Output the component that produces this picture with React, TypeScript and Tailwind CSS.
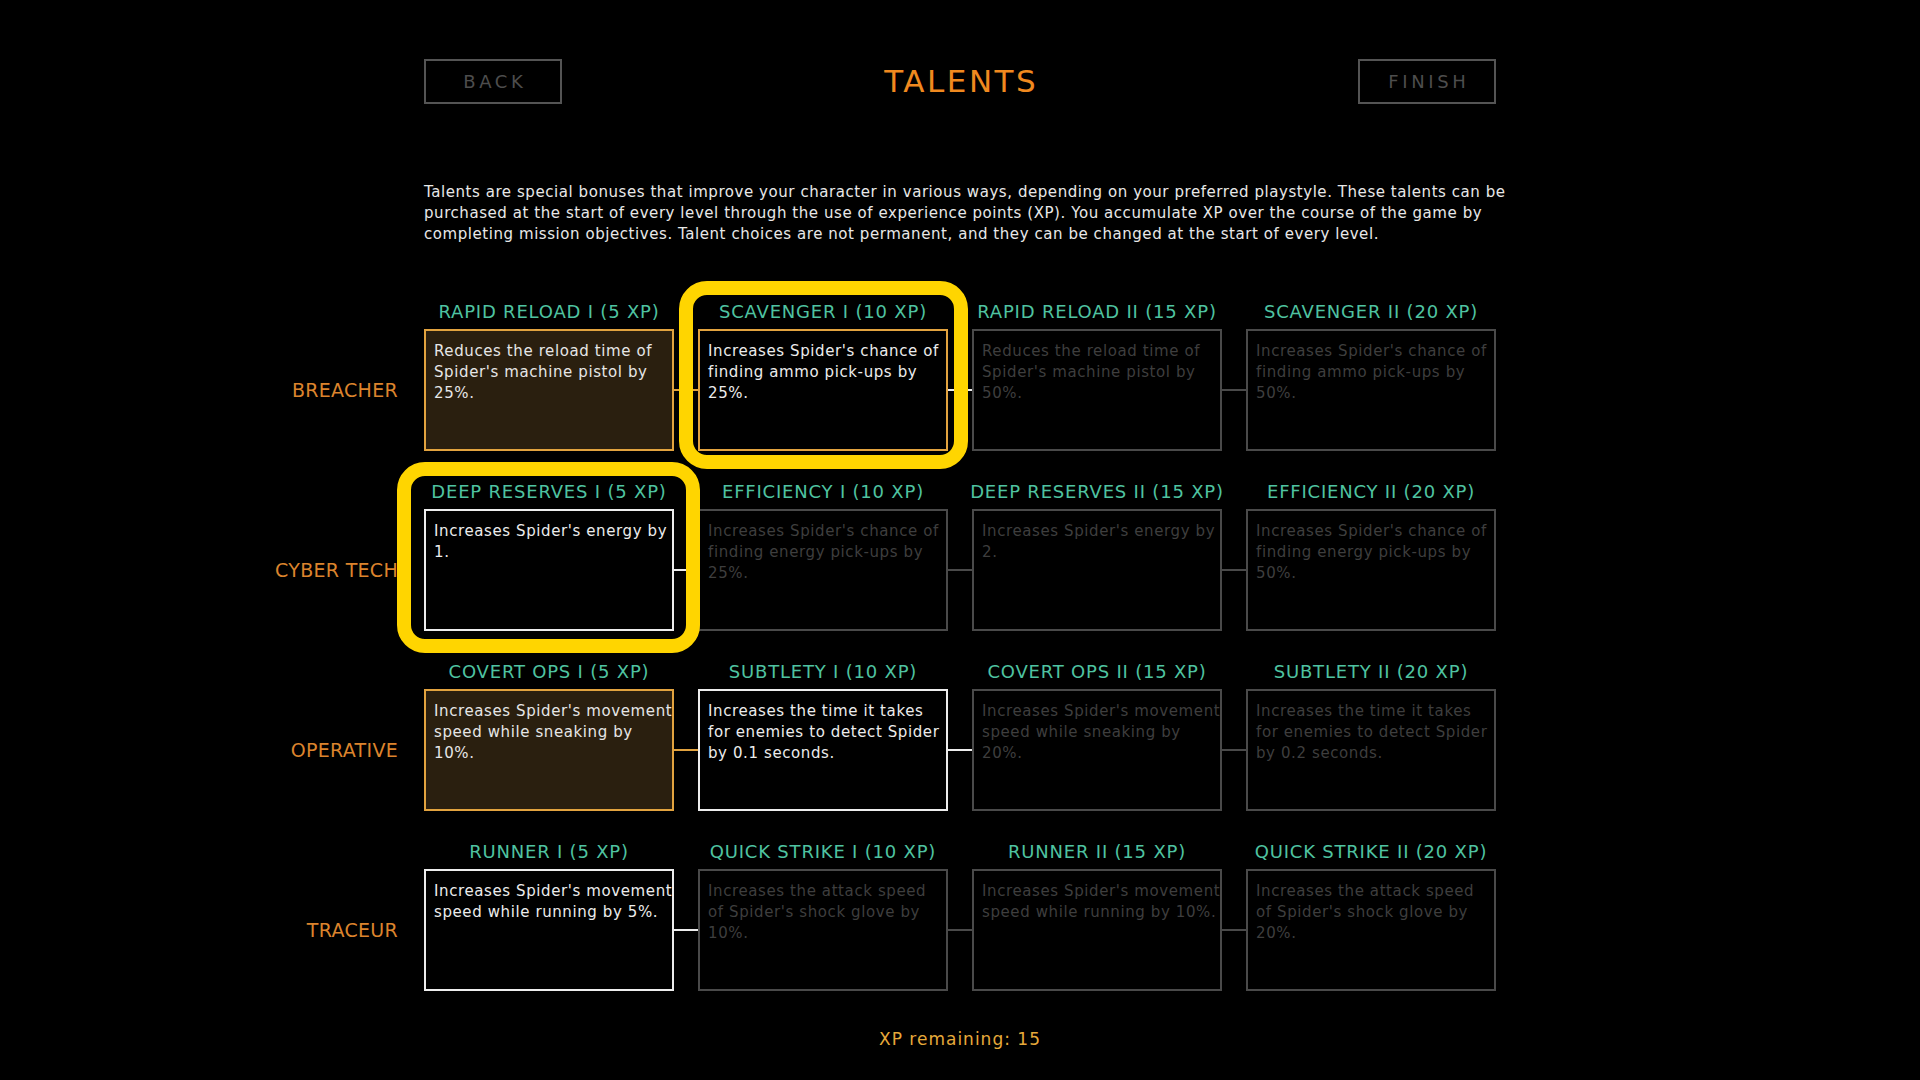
import React from 'react'

type State = 'owned' | 'selected' | 'available' | 'locked'

interface Talent {
    title: string
    lines: string[]
    state: State
    highlight?: string
}

interface TalentRow {
    label: string
    talents: Talent[]
}

const rows: TalentRow[] = [
    {
        label: 'BREACHER',
        talents: [
            { title: 'RAPID RELOAD I (5 XP)', lines: ['Reduces the reload time of', "Spider's machine pistol by", '25%.'], state: 'owned' },
            { title: 'SCAVENGER I (10 XP)', lines: ["Increases Spider's chance of", 'finding ammo pick-ups by', '25%.'], state: 'selected', highlight: '-left-[19px] -right-[20px] -top-[12px] -bottom-[18px]' },
            { title: 'RAPID RELOAD II (15 XP)', lines: ['Reduces the reload time of', "Spider's machine pistol by", '50%.'], state: 'locked' },
            { title: 'SCAVENGER II (20 XP)', lines: ["Increases Spider's chance of", 'finding ammo pick-ups by', '50%.'], state: 'locked' },
        ],
    },
    {
        label: 'CYBER TECH',
        talents: [
            { title: 'DEEP RESERVES I (5 XP)', lines: ["Increases Spider's energy by", '1.'], state: 'available', highlight: '-left-[27px] -right-[26px] -top-[11px] -bottom-[22px]' },
            { title: 'EFFICIENCY I (10 XP)', lines: ["Increases Spider's chance of", 'finding energy pick-ups by', '25%.'], state: 'locked' },
            { title: 'DEEP RESERVES II (15 XP)', lines: ["Increases Spider's energy by", '2.'], state: 'locked' },
            { title: 'EFFICIENCY II (20 XP)', lines: ["Increases Spider's chance of", 'finding energy pick-ups by', '50%.'], state: 'locked' },
        ],
    },
    {
        label: 'OPERATIVE',
        talents: [
            { title: 'COVERT OPS I (5 XP)', lines: ["Increases Spider's movement", 'speed while sneaking by', '10%.'], state: 'owned' },
            { title: 'SUBTLETY I (10 XP)', lines: ['Increases the time it takes', 'for enemies to detect Spider', 'by 0.1 seconds.'], state: 'available' },
            { title: 'COVERT OPS II (15 XP)', lines: ["Increases Spider's movement", 'speed while sneaking by', '20%.'], state: 'locked' },
            { title: 'SUBTLETY II (20 XP)', lines: ['Increases the time it takes', 'for enemies to detect Spider', 'by 0.2 seconds.'], state: 'locked' },
        ],
    },
    {
        label: 'TRACEUR',
        talents: [
            { title: 'RUNNER I (5 XP)', lines: ["Increases Spider's movement", 'speed while running by 5%.'], state: 'available' },
            { title: 'QUICK STRIKE I (10 XP)', lines: ['Increases the attack speed', "of Spider's shock glove by", '10%.'], state: 'locked' },
            { title: 'RUNNER II (15 XP)', lines: ["Increases Spider's movement", 'speed while running by 10%.'], state: 'locked' },
            { title: 'QUICK STRIKE II (20 XP)', lines: ['Increases the attack speed', "of Spider's shock glove by", '20%.'], state: 'locked' },
        ],
    },
]

const cardStyles: Record<State, string> = {
    owned: 'bg-[#2a1f0f] border-[#e2a33f] text-[#e6e6e6]',
    selected: 'bg-black border-[#e2a33f] text-[#ececec]',
    available: 'bg-black border-[#ededed] text-[#ececec]',
    locked: 'bg-black border-[#4a4a4a] text-[#3e3e3e]',
}

const lineStyles: Record<State, string> = {
    owned: 'bg-[#e2a33f]',
    selected: 'bg-[#ededed]',
    available: 'bg-[#ededed]',
    locked: 'bg-[#4a4a4a]',
}

const TalentCell = ({ talent }: { talent: Talent }) => (
    <div className="relative w-[250px] flex flex-col">
        <div className="h-[36px] flex items-center justify-center text-[18px] tracking-[0.8px] text-[#4fc3a1] whitespace-nowrap">
            {talent.title}
        </div>
        <div className={`h-[122px] border-2 pt-[10px] pl-[8px] text-[15px] leading-[21px] tracking-[0.6px] ${cardStyles[talent.state]}`}>
            {talent.lines.map((line) => (
                <div key={line} className="whitespace-nowrap">{line}</div>
            ))}
        </div>
        {talent.highlight && (
            <div className={`absolute z-10 border-[14px] border-[#ffd500] rounded-[28px] pointer-events-none ${talent.highlight}`} />
        )}
    </div>
)

const Connector = ({ state }: { state: State }) => (
    <div className="w-[24px] h-[122px] mt-[36px] flex items-center">
        <div className={`w-full h-[2px] ${lineStyles[state]}`} />
    </div>
)

const NavButton = ({ children }: { children: React.ReactNode }) => (
    <button className="w-[138px] h-[45px] border-2 border-[#545454] text-[#4d4d4d] text-[18px] tracking-[0.2em] pl-[0.2em]">
        {children}
    </button>
)

export default function App() {
    return (
        <div className="min-h-screen w-full bg-black font-['DejaVu_Sans','Liberation_Sans',sans-serif]">
            <div className="w-[1072px] mx-auto pt-[59px]">
                <div className="h-[45px] flex items-center justify-between">
                    <NavButton>BACK</NavButton>
                    <h1 className="text-[31px] tracking-[2.5px] pl-[2.5px] text-[#f0891f]">TALENTS</h1>
                    <NavButton>FINISH</NavButton>
                </div>

                <p className="mt-[78px] text-[15px] leading-[21px] tracking-[0.56px] text-[#e8e8e8] whitespace-nowrap">
                    Talents are special bonuses that improve your character in various ways, depending on your preferred playstyle. These talents can be<br />
                    purchased at the start of every level through the use of experience points (XP). You accumulate XP over the course of the game by<br />
                    completing mission objectives. Talent choices are not permanent, and they can be changed at the start of every level.
                </p>

                <div className="mt-[48px] flex flex-col gap-[22px]">
                    {rows.map((row) => (
                        <div key={row.label} className="flex">
                            <div className="-ml-[176px] w-[150px] mr-[26px] h-[122px] mt-[36px] flex items-center justify-end text-[19px] tracking-[0.3px] text-[#dc842d] whitespace-nowrap">
                                {row.label}
                            </div>
                            {row.talents.map((talent, i) => (
                                <React.Fragment key={talent.title}>
                                    {i > 0 && <Connector state={row.talents[i - 1].state} />}
                                    <TalentCell talent={talent} />
                                </React.Fragment>
                            ))}
                        </div>
                    ))}
                </div>

                <div className="mt-[36px] text-center text-[17px] leading-[24px] tracking-[1px] text-[#e6a93a]">
                    XP remaining: 15
                </div>
            </div>
        </div>
    )
}
